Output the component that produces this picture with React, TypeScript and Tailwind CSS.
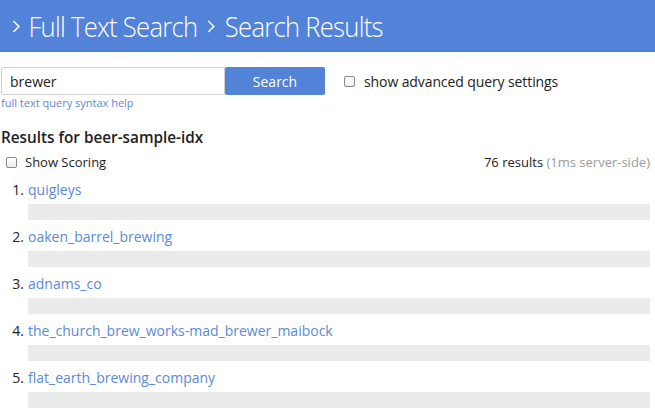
import React from 'react'

const results = [
  'quigleys',
  'oaken_barrel_brewing',
  'adnams_co',
  'the_church_brew_works-mad_brewer_maibock',
  'flat_earth_brewing_company',
]

function Checkbox() {
  return (
    <span className="inline-block w-[11px] h-[11px] rounded-[2px] border border-[#8a8a8a] bg-gradient-to-b from-white to-[#ededed]" />
  )
}

function Chevron() {
  return (
    <svg width="9" height="13" viewBox="0 0 9 13" className="shrink-0">
      <polyline points="1.5,1 7.5,6.5 1.5,12" fill="none" stroke="white" strokeWidth="1.6" />
    </svg>
  )
}

export default function App() {
  return (
    <div className="w-[655px] h-[412px] overflow-hidden bg-white text-[#222] font-['Open_Sans',sans-serif]">
      {/* Header */}
      <div className="h-[52px] bg-[#5283d8] flex items-center pl-[12px]">
        <h1 className="text-white text-[28px] font-light leading-none tracking-[-0.8px] flex items-center scale-x-[0.915] origin-left whitespace-nowrap">
          <Chevron />
          <span className="ml-[9px]">Full Text Search</span>
          <span className="ml-[10px]"><Chevron /></span>
          <span className="ml-[11px]">Search Results</span>
        </h1>
      </div>

      {/* Search row */}
      <div className="flex items-center mt-[15px] pl-[1px]">
        <input
          readOnly
          value="brewer"
          className="w-[224px] h-[28px] border border-[#d0d0d0] rounded-l-[2px] px-[8px] text-[14px] text-[#222] outline-none"
        />
        <button className="w-[100px] h-[28px] bg-[#5283d8] text-white text-[14px] rounded-[2px]">
          Search
        </button>
        <label className="flex items-center ml-[19px] gap-[9px] text-[14px] text-[#222] tracking-[-0.1px]">
          <Checkbox />
          show advanced query settings
        </label>
      </div>
      <a className="block ml-[1px] mt-[1px] text-[11px] text-[#5a8ad8] leading-[14px]">
        full text query syntax help
      </a>

      {/* Results header */}
      <div className="mt-[17px] ml-[1px] text-[15.3px] font-semibold leading-[20px]">
        Results for beer-sample-idx
      </div>
      <div className="flex items-center justify-between mt-[6px] pr-[5px] text-[13px] leading-[18px]">
        <label className="flex items-center gap-[8px] ml-[6px]">
          <Checkbox />
          Show Scoring
        </label>
        <span>
          76 results <span className="text-[#9a9a9a]">(1ms server-side)</span>
        </span>
      </div>

      {/* Results list */}
      <ol className="mt-[9px] pr-[5px]">
        {results.map((r, i) => (
          <li key={r} className="flex mb-[7px]">
            <span className="w-[28px] text-right pr-[4px] text-[14px] leading-[19px]">{i + 1}.</span>
            <div className="flex-1">
              <a className="block text-[14px] leading-[19px] text-[#5a8ad8]">{r}</a>
              <div className="h-[16px] bg-[#ebebeb] mt-[5px]" />
            </div>
          </li>
        ))}
      </ol>
    </div>
  )
}
